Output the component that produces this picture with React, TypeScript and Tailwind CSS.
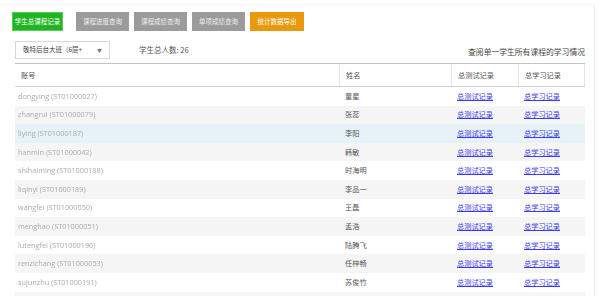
import React from "react";

const rows: [string, string][] = [
  ["dongying (ST01000027)", "董星"],
  ["zhangrui (ST01000079)", "张蕊"],
  ["liying (ST01000187)", "李阳"],
  ["hanmin (ST01000042)", "韩敏"],
  ["shihaiming (ST01000188)", "时海明"],
  ["liqinyi (ST01000189)", "李品一"],
  ["wangfei (ST01000050)", "王磊"],
  ["menghao (ST01000051)", "孟浩"],
  ["lutengfei (ST01000190)", "陆腾飞"],
  ["renzichang (ST01000053)", "任梓畅"],
  ["sujunzhu (ST01000191)", "苏俊竹"],
];

const cjk = { fontFamily: '"Noto Sans CJK SC", "Noto Sans", sans-serif' };

export default function App() {
  return (
    <div className="relative h-[296px] w-[600px] overflow-hidden bg-white" style={cjk}>
      <div className="absolute right-[5px] top-[4px] bottom-0 w-px bg-[#f0f0f0]" />
      <div className="absolute left-0 right-[5px] top-[4px] h-px bg-[#f4f4f4]" />
      <div className="flex items-center pl-[12px] pt-[12px]">
        <div className="flex h-[19px] w-[51px] items-center justify-center border border-[#55cc55] bg-[#22b522] text-[6.5px] text-white">
          学生总课程记录
        </div>
        <div className="ml-[13px] flex gap-[5px]">
          <div className="flex h-[19px] w-[53px] items-center justify-center bg-[#9b9b9b] text-[6.5px] text-[#eeeeee]">课程进度查询</div>
          <div className="flex h-[19px] w-[53px] items-center justify-center bg-[#9b9b9b] text-[6.5px] text-[#eeeeee]">课程成绩查询</div>
          <div className="flex h-[19px] w-[53px] items-center justify-center bg-[#9b9b9b] text-[6.5px] text-[#eeeeee]">单项成绩查询</div>
          <div className="flex h-[19px] w-[54px] items-center justify-center bg-[#e89a0c] text-[6.5px] text-white">统计数据导出</div>
        </div>
      </div>
      <div className="ml-[15px] mr-[15px] mt-[10px] flex items-center">
        <div className="flex h-[18px] w-[95px] items-center justify-between border border-[#d8d8d8] pl-[7px] pr-[7px] text-[6.5px] text-[#444]">
          <span>敬特后台大班（6层+</span>
          <span className="text-[5px] text-[#777]">▼</span>
        </div>
        <div className="ml-[29px] text-[7.5px] text-[#555]">学生总人数: 26</div>
        <div className="ml-auto mt-[3px] text-[7.8px] text-[#444]">查阅单一学生所有课程的学习情况</div>
      </div>
      <div className="ml-[15px] mr-[15px] mt-[4px] border-t border-[#c4c4c4]">
        <div className="grid h-[23px] grid-cols-[324px_112px_67px_67px] border-b border-[#d6d6d6] text-[7.2px] text-[#555]">
          <div className="flex items-center pl-[6px]">账号</div>
          <div className="flex items-center border-l border-[#e4e4e4] pl-[6px]">姓名</div>
          <div className="flex items-center border-l border-[#e4e4e4] pl-[6px]">总测试记录</div>
          <div className="flex items-center border-l border-r border-[#e4e4e4] pl-[6px]">总学习记录</div>
        </div>
        {rows.map(([acc, name], i) => {
          const bg = i === 2 ? "bg-[#e6f2f7]" : i % 2 === 1 ? "bg-[#f5f5f5]" : "bg-white";
          return (
            <div key={i} className={`grid h-[18.6px] grid-cols-[324px_112px_67px_67px] items-center text-[7.2px] ${bg}`}>
              <div className="pl-[3px] text-[7.3px] text-[#ababab] blur-[0.6px]" style={{ fontFamily: '"Open Sans", sans-serif' }}>
                {acc}
              </div>
              <div className="pl-[6px] text-[#555]">{name}</div>
              <div className="pl-[6px] text-[#3b3bea] underline">总测试记录</div>
              <div className="pl-[6px] text-[#3b3bea] underline">总学习记录</div>
            </div>
          );
        })}
        <div className="h-[18.6px] bg-[#f5f5f5]" />
      </div>
    </div>
  );
}
